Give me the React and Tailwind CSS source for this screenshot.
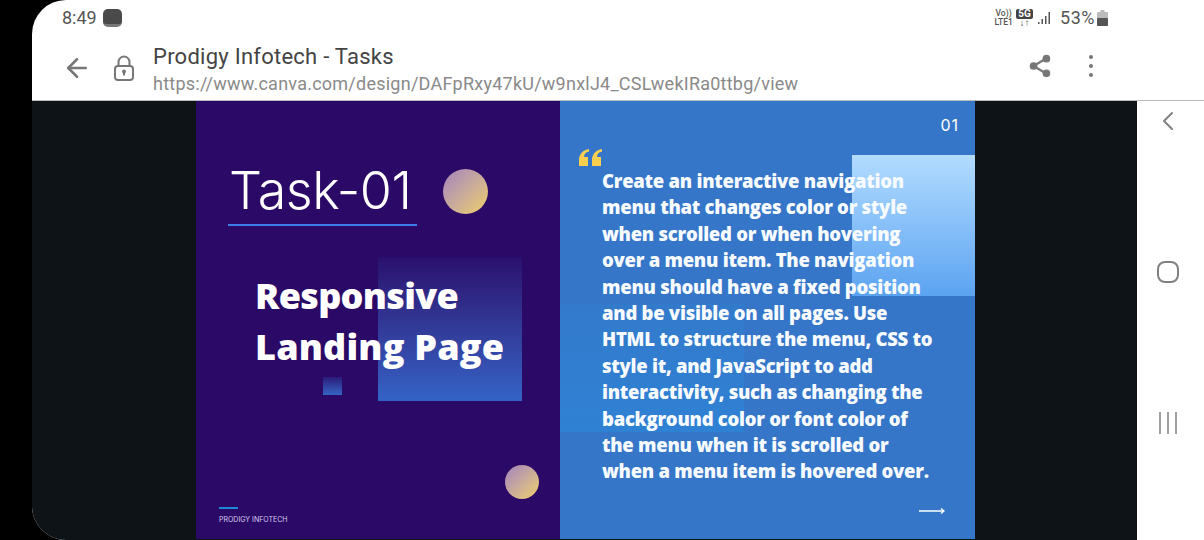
import React from 'react';
import { ArrowLeft, ChevronLeft } from 'lucide-react';

const lines = [
  'Create an interactive navigation',
  'menu that changes color or style',
  'when scrolled or when hovering',
  'over a menu item. The navigation',
  'menu should have a fixed position',
  'and be visible on all pages. Use',
  'HTML to structure the menu, CSS to',
  'style it, and JavaScript to add',
  'interactivity, such as changing the',
  'background color or font color of',
  'the menu when it is scrolled or',
  'when a menu item is hovered over.',
];

const StatusBar = () => (
  <div className="h-[33px] flex items-center justify-between pl-[30px] pr-[96px] pt-[2px] text-[#555]">
    <div className="flex items-center gap-[6px]">
      <span className="text-[18px] leading-none">8:49</span>
      <div className="w-[19px] h-[18px] rounded-[5px] bg-[#4a4a4a] border-b-[3px] border-[#777]" />
    </div>
    <div className="flex items-center">
      <div className="text-[8.5px] leading-[8.5px] font-medium text-center w-[21px] mr-[2px]">
        <div>Vo))</div>
        <div>LTE1</div>
      </div>
      <div className="flex flex-col items-center w-[17px] mr-[5px]">
        <span className="bg-[#444] text-white rounded-[2px] text-[10px] leading-[10px] font-bold px-[2px]">5G</span>
        <span className="text-[10px] leading-[8px] font-bold">↓↑</span>
      </div>
      <svg width="14" height="16" viewBox="0 0 14 16" className="mr-[8px]" fill="#555">
        <rect x="0" y="12" width="1.5" height="2" />
        <rect x="3.5" y="9" width="1.5" height="5" />
        <rect x="7" y="6" width="1.5" height="8" />
        <rect x="10.5" y="2" width="1.5" height="12" />
      </svg>
      <span className="text-[18px] leading-none tracking-[0.5px]">53%</span>
      <svg width="11" height="16" viewBox="0 0 11 16" className="ml-[2px]">
        <rect x="3.5" y="0" width="4" height="2" fill="#bbb" />
        <rect x="0" y="2" width="11" height="14" rx="1" fill="#bbb" />
        <rect x="0" y="8" width="11" height="8" rx="1" fill="#555" />
      </svg>
    </div>
  </div>
);

const UrlBar = () => (
  <div className="h-[68px] flex items-start border-b border-[#b9bdbd]">
    <ArrowLeft size={30} strokeWidth={2} className="text-[#777] ml-[30px] mt-[20px] shrink-0" />
    <svg width="22" height="28" viewBox="0 0 22 28" fill="none" stroke="#777" strokeWidth="2" className="ml-[21px] mt-[21px] shrink-0">
      <path d="M5.5 12V8a5.500 5.500 0 0 1 11 0v4" />
      <rect x="2" y="12" width="18" height="14" rx="3" />
      <path d="M11 17.500v4" />
      <circle cx="11" cy="17.500" r="1" fill="#777" />
    </svg>
    <div className="ml-[18px] pt-[10px]">
      <div className="text-[22px] leading-[28px] text-[#444] tracking-[0.25px]">Prodigy Infotech - Tasks</div>
      <div className="text-[18px] leading-[26px] text-[#8a8a8a] tracking-[0.24px]">
        https://www.canva.com/design/DAFpRxy47kU/w9nxlJ4_CSLwekIRa0ttbg/view
      </div>
    </div>
    <div className="ml-auto flex items-center mt-[21px] pr-[111px]">
      <svg width="22" height="24" viewBox="0 0 24 26" fill="#777" stroke="#777" strokeWidth="2.4">
        <path d="M19 4.500 5 13l14 8.500" fill="none" />
        <circle cx="19" cy="5" r="3" />
        <circle cx="5" cy="13" r="3" />
        <circle cx="19" cy="21" r="3" />
      </svg>
      <div className="ml-[38px] flex flex-col gap-[5px]">
        <div className="w-[4px] h-[4px] rounded-full bg-[#777]" />
        <div className="w-[4px] h-[4px] rounded-full bg-[#777]" />
        <div className="w-[4px] h-[4px] rounded-full bg-[#777]" />
      </div>
    </div>
  </div>
);

const LeftSlide = () => (
  <div className="relative w-[364px] bg-[#2a0a66] overflow-hidden">
    <div className="absolute left-[182px] top-[156px] w-[144px] h-[144px] bg-gradient-to-b from-[#2a0f6e] to-[#3363c6]" />
    <div className="absolute left-[127px] top-[276px] w-[19px] h-[18px] bg-gradient-to-b from-[#2a1a7a] to-[#3364c4]" />
    <div className="absolute left-[247px] top-[68px] w-[45px] h-[45px] rounded-full bg-gradient-to-br from-[#a582bd] to-[#f0cf62]" />
    <div className="absolute left-[309px] top-[364px] w-[34px] h-[34px] rounded-full bg-gradient-to-br from-[#a582bd] to-[#f0cf62]" />
    <div className="relative pl-[32px] pt-[58px]">
      <div className="w-[189px] h-[67px] border-b-2 border-[#3f7ce8]">
        <div className="text-[52px] leading-[64px] font-light text-white font-['Inter'] whitespace-nowrap pl-[1px] tracking-[-0.5px]">
          Task-01
        </div>
      </div>
      <div className="mt-[44px] ml-[27px] text-[36px] leading-[51px] font-extrabold text-white whitespace-nowrap font-['Open_Sans']">
        <div className="tracking-[-0.7px]">Responsive</div>
        <div className="tracking-[0.2px]">Landing Page</div>
      </div>
    </div>
    <div className="absolute left-[23px] bottom-[14px]">
      <div className="w-[19px] h-[2px] bg-[#1e88d8] mb-[6px]" />
      <div className="text-[7px] leading-[10px] text-[#d9cdf0] font-['Inter']">PRODIGY INFOTECH</div>
    </div>
  </div>
);

const RightSlide = () => (
  <div className="relative w-[415px] bg-[#3576c8] overflow-hidden">
    <div className="absolute left-0 top-[202px] w-[184px] h-[129px] bg-gradient-to-b from-[#337acb] to-[#2f81d4]" />
    <div className="absolute left-[292px] top-[54px] w-[123px] h-[141px] bg-gradient-to-b from-[#b2dcff] to-[#5ba3f1]" />
    <div className="relative pt-[15px] pl-[19px]">
      <div className="text-right pr-[16px] text-[16px] leading-[18px] text-white font-['Inter'] tracking-[1px]">01</div>
      <svg width="24" height="18" viewBox="0 0 24 18" fill="#f8cf4f" className="mt-[15px]">
        <path d="M10 0C4 1 0 5 0 11v6h9V8H5c0-3 2-5 5-5.500zM23 0c-6 1-10 5-10 11v6h9V8h-4c0-3 2-5 5-5.500z" />
      </svg>
      <div className="ml-[23px] mt-[1px] text-[18.5px] leading-[26.4px] font-extrabold text-[#f7fbff] font-['Open_Sans'] whitespace-nowrap tracking-[-0.27px]">
        {lines.map((line) => (
          <div key={line}>{line}</div>
        ))}
      </div>
    </div>
    <svg width="28" height="8" viewBox="0 0 28 8" fill="none" stroke="white" className="absolute left-[358px] top-[406px]">
      <path d="M1 4h25M23 1.500 26 4l-3 2.500" strokeWidth="1.300" />
    </svg>
  </div>
);

const NavBar = () => (
  <div className="w-[67px] bg-white flex flex-col items-center text-[#808080]">
    <ChevronLeft size={32} strokeWidth={1.5} className="mt-[4px] -ml-[5px]" />
    <div className="mt-[124px] -ml-[5px] w-[22px] h-[22px] rounded-[8px] border-2 border-[#808080]" />
    <div className="mt-[129px] -ml-[5px] flex gap-[6px]">
      <div className="w-[2px] h-[22px] bg-[#a0a0a0]" />
      <div className="w-[2px] h-[22px] bg-[#a0a0a0]" />
      <div className="w-[2px] h-[22px] bg-[#a0a0a0]" />
    </div>
  </div>
);

export default function App() {
  return (
    <div className="w-[1204px] h-[540px] bg-black pl-[32px] overflow-hidden font-['Roboto',sans-serif]">
      <div className="h-full bg-white rounded-l-[34px] overflow-hidden flex flex-col">
        <StatusBar />
        <UrlBar />
        <div className="flex-1 flex">
          <div className="flex-1 flex bg-[#0d1317] pb-[1px]">
            <div className="w-[164px]" />
            <LeftSlide />
            <RightSlide />
          </div>
          <NavBar />
        </div>
      </div>
    </div>
  );
}
